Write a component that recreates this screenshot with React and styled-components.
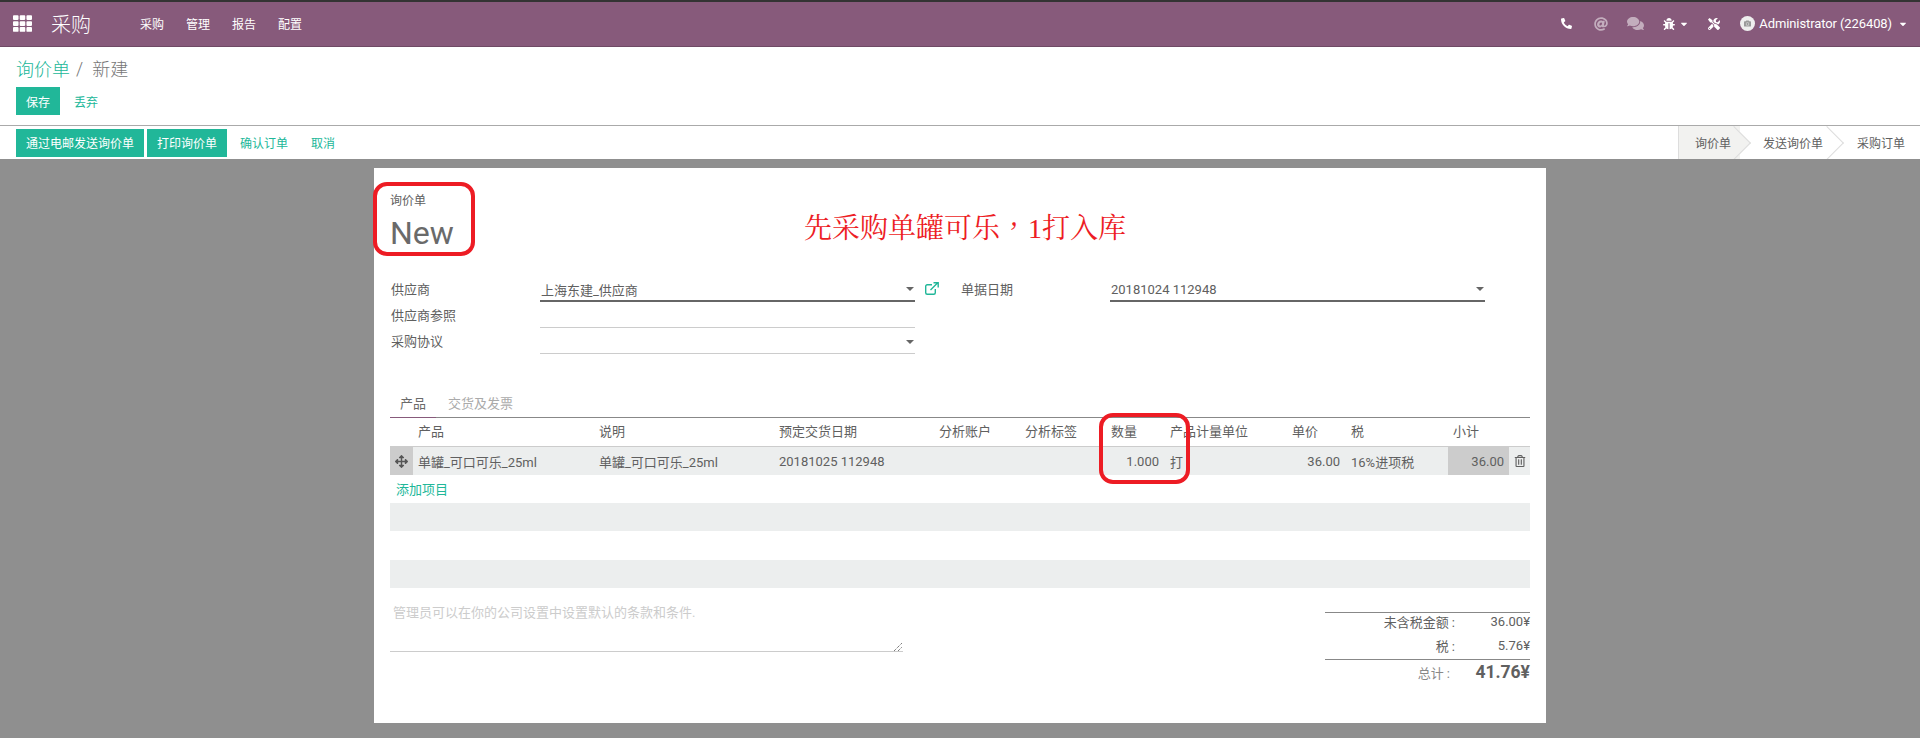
import React from 'react'
import styled, { createGlobalStyle } from 'styled-components'
import { FaTh, FaPhone, FaAt, FaComments, FaBug, FaTools, FaCaretDown, FaArrowsAlt, FaRegTrashAlt, FaCamera } from 'react-icons/fa'

const GlobalStyle = createGlobalStyle`
  html, body { margin: 0; padding: 0; height: 100%; }
  body {
    font-family: Roboto, "Noto Sans CJK SC", sans-serif;
    font-size: 13px;
    color: #606060;
    background: #8f8f8f;
    overflow: hidden;
  }
  * { box-sizing: border-box; }
`

const COLUMNS = '23px 181px 180px 160px 86px 86px 59px 122px 59px 102px 61px 21px'

const App = () => {
  return (
    <>
      <GlobalStyle />
      <Page>
        <Nav>
          <AppsIcon><FaTh size={19} /></AppsIcon>
          <Brand>采购</Brand>
          <Menu>
            <MenuItem>采购</MenuItem>
            <MenuItem>管理</MenuItem>
            <MenuItem>报告</MenuItem>
            <MenuItem>配置</MenuItem>
          </Menu>
          <Systray>
            <TrayIcon $width={33}><FaPhone size={11} style={{ transform: 'scaleX(-1)' }} /></TrayIcon>
            <TrayIcon $width={33} $dim><FaAt size={14} /></TrayIcon>
            <TrayIcon $width={36} $dim><FaComments size={17} /></TrayIcon>
            <TrayIcon $width={45}><FaBug size={12} /><FaCaretDown size={10} /></TrayIcon>
            <TrayIcon $width={32}><FaTools size={12} /></TrayIcon>
            <Avatar><FaCamera size={7} /></Avatar>
            <UserName>Administrator (226408)</UserName>
            <FaCaretDown size={10} />
          </Systray>
        </Nav>

        <ControlPanel>
          <Breadcrumb>
            <CrumbLink>询价单</CrumbLink>
            <CrumbSep>/</CrumbSep>
            <CrumbCurrent>新建</CrumbCurrent>
          </Breadcrumb>
          <Actions>
            <PrimaryButton>保存</PrimaryButton>
            <LinkButton>丢弃</LinkButton>
          </Actions>
        </ControlPanel>

        <StatusBar>
          <StatusActions>
            <PrimaryButton>通过电邮发送询价单</PrimaryButton>
            <PrimaryButton>打印询价单</PrimaryButton>
            <StatusLink>确认订单</StatusLink>
            <StatusLink>取消</StatusLink>
          </StatusActions>
          <Stages>
            <Stage $active $level={3} $left={16} $right={9}>询价单</Stage>
            <Stage $level={2} $left={23} $right={10}>发送询价单</Stage>
            <Stage $level={1} $left={24} $right={15} $last>采购订单</Stage>
          </Stages>
        </StatusBar>

        <Sheet>
          <Ring $left={-1} $top={14} $width={102} $height={74} />
          <Ring $left={725} $top={245} $width={91} $height={71} />
          <Note>先采购单罐可乐<Comma>，</Comma>1打入库</Note>

          <TitleLabel>询价单</TitleLabel>
          <Title>New</Title>

          <FormGrid>
            <Label>供应商</Label>
            <Field $active>
              <span>上海东建_供应商</span>
              <Caret />
            </Field>
            <LinkCell>
              <svg width="14" height="13" viewBox="0 0 14 13" fill="none" stroke="#21b799" strokeWidth="1.4">
                <path d="M7 2.7H2.2a1.5 1.5 0 0 0-1.5 1.5v6.6a1.5 1.5 0 0 0 1.5 1.5h6.6a1.5 1.5 0 0 0 1.5-1.5V7" />
                <path d="M5.5 8L12.5 1M8.5.8h4.7v4.7" />
              </svg>
            </LinkCell>
            <Label>单据日期</Label>
            <Field $active>
              <span>20181024 112948</span>
              <Caret />
            </Field>

            <Label>供应商参照</Label>
            <Field />
            <Spacer />

            <Label>采购协议</Label>
            <Field>
              <span />
              <Caret />
            </Field>
            <Spacer />
          </FormGrid>

          <Tabs>
            <Tab $active>产品</Tab>
            <Tab>交货及发票</Tab>
          </Tabs>

          <HeadRow>
            <Cell />
            <Cell>产品</Cell>
            <Cell>说明</Cell>
            <Cell>预定交货日期</Cell>
            <Cell>分析账户</Cell>
            <Cell>分析标签</Cell>
            <Cell>数量</Cell>
            <Cell>产品计量单位</Cell>
            <Cell>单价</Cell>
            <Cell>税</Cell>
            <Cell>小计</Cell>
            <Cell />
          </HeadRow>
          <BodyRow>
            <Handle><FaArrowsAlt size={13} /></Handle>
            <Cell>单罐_可口可乐_25ml</Cell>
            <Cell>单罐_可口可乐_25ml</Cell>
            <Cell>20181025 112948</Cell>
            <Cell />
            <Cell />
            <Cell $right>1.000</Cell>
            <Cell>打</Cell>
            <Cell $right>36.00</Cell>
            <Cell>16%进项税</Cell>
            <SubtotalCell>36.00</SubtotalCell>
            <TrashCell><FaRegTrashAlt size={12} /></TrashCell>
          </BodyRow>
          <AddRow>添加项目</AddRow>
          <BlankRow $filled />
          <BlankRow $tall />
          <BlankRow $filled />

          <Footer>
            <Notes>
              管理员可以在你的公司设置中设置默认的条款和条件.
              <Grip width="8" height="8" viewBox="0 0 8 8">
                <path d="M0 8L8 0M4 8L8 4" stroke="#444" strokeWidth="1" strokeDasharray="1 1" />
              </Grip>
            </Notes>
            <Totals>
              <TotalLabel>未含税金额 :</TotalLabel>
              <TotalValue>36.00¥</TotalValue>
              <TotalLabel>税 :</TotalLabel>
              <TotalValue>5.76¥</TotalValue>
              <GrandLabel>总计 :</GrandLabel>
              <GrandValue>41.76¥</GrandValue>
            </Totals>
          </Footer>
        </Sheet>
      </Page>
    </>
  )
}

export default App

const Page = styled.div`
  height: 738px;
  display: flex;
  flex-direction: column;
  overflow: hidden;
`

const Nav = styled.div`
  height: 47px;
  flex: none;
  display: flex;
  align-items: center;
  padding-bottom: 1px;
  background: #875a7b;
  border-top: 2px solid #333;
  border-bottom: 1px solid #6f4a65;
  color: #fff;
`

const AppsIcon = styled.div`
  width: 51px;
  padding-left: 13px;
  display: flex;
`

const Brand = styled.div`
  width: 84px;
  font-size: 20px;
  font-weight: 300;
`

const Menu = styled.div`
  display: flex;
  margin-left: 5px;
  gap: 22px;
`

const MenuItem = styled.div`
  font-size: 12px;
`

const Systray = styled.div`
  margin-left: auto;
  padding-right: 12px;
  display: flex;
  align-items: center;
`

const TrayIcon = styled.div`
  width: ${p => p.$width}px;
  display: flex;
  align-items: center;
  gap: 4px;
  opacity: ${p => (p.$dim ? 0.5 : 1)};
`

const Avatar = styled.div`
  width: 15px;
  height: 15px;
  border-radius: 50%;
  background: #eee;
  color: #999;
  display: flex;
  align-items: center;
  justify-content: center;
`

const UserName = styled.div`
  font-size: 13px;
  letter-spacing: -0.1px;
  margin: 0 6px 0 4px;
`

const ControlPanel = styled.div`
  flex: none;
  height: 78px;
  padding: 9px 16px 0;
  background: #fff;
`

const Breadcrumb = styled.div`
  display: flex;
  align-items: center;
  height: 24px;
  font-size: 18px;
  font-weight: 300;
`

const CrumbLink = styled.span`
  color: #21b799;
`

const CrumbSep = styled.span`
  color: #777;
  margin: 0 9px 0 6px;
`

const CrumbCurrent = styled.span`
  color: #777;
`

const Actions = styled.div`
  display: flex;
  margin-top: 7px;
`

const PrimaryButton = styled.button`
  height: 28px;
  padding: 0 10px;
  border: 0;
  background: #21b799;
  color: #fff;
  font: inherit;
  font-size: 12px;
`

const LinkButton = styled(PrimaryButton)`
  background: transparent;
  color: #21b799;
  padding: 0 14px;
`

const StatusLink = styled(LinkButton)`
  padding: 0 10px;
`

const StatusBar = styled.div`
  flex: none;
  height: 34px;
  display: flex;
  justify-content: space-between;
  background: #fff;
  border-top: 1px solid #aaa;
  padding-left: 16px;
`

const StatusActions = styled.div`
  display: flex;
  align-items: center;
  gap: 3px;
`

const Stages = styled.div`
  display: flex;
  overflow: hidden;
  border-left: 1px solid #ddd;
`

const Stage = styled.div`
  position: relative;
  display: flex;
  align-items: center;
  font-size: 12px;
  color: #606060;
  padding: 0 ${p => p.$right}px 0 ${p => p.$left}px;
  background: ${p => (p.$active ? '#f2f2f0' : '#fff')};
  z-index: ${p => p.$level};

  &::after {
    content: '';
    display: ${p => (p.$last ? 'none' : 'block')};
    position: absolute;
    z-index: -1;
    top: 5px;
    right: -6px;
    width: 23px;
    height: 23px;
    transform: rotate(45deg);
    background: ${p => (p.$active ? '#f2f2f0' : '#fff')};
    border-top: 1px solid #ddd;
    border-right: 1px solid #ddd;
  }
`

const Sheet = styled.div`
  position: relative;
  flex: none;
  width: 1172px;
  height: 555px;
  margin: 9px 0 0 374px;
  padding: 24px 16px 0;
  background: #fff;
`

const Ring = styled.div`
  position: absolute;
  left: ${p => p.$left}px;
  top: ${p => p.$top}px;
  width: ${p => p.$width}px;
  height: ${p => p.$height}px;
  border: 4px solid #ed1c24;
  border-radius: 14px;
  z-index: 3;
`

const Note = styled.div`
  position: absolute;
  left: 430px;
  top: 41px;
  color: #ed1c24;
  font-family: "Liberation Serif", "Noto Serif CJK SC", "Noto Sans CJK SC", serif;
  font-size: 28px;
  line-height: 34px;
  white-space: nowrap;
`

const Comma = styled.span`
  font-family: "Noto Serif CJK TC", "Noto Sans CJK TC", serif;
`

const TitleLabel = styled.div`
  font-size: 12px;
  line-height: 18px;
`

const Title = styled.div`
  font-size: 32px;
  line-height: 42px;
  margin-top: 2px;
  color: #6a6a6a;
`

const FormGrid = styled.div`
  display: grid;
  grid-template-columns: 150px 375px 45px 150px 375px;
  grid-auto-rows: 26px;
  margin-top: 22px;
`

const Label = styled.div`
  display: flex;
  align-items: center;
  padding: 0 0 1px 1px;
`

const Field = styled.div`
  display: flex;
  align-items: center;
  justify-content: space-between;
  padding: 2px 1px 0;
  border-bottom: ${p => (p.$active ? '2px solid #666' : '1px solid #ccc')};
`

const Caret = styled.i`
  width: 0;
  height: 0;
  border-left: 4px solid transparent;
  border-right: 4px solid transparent;
  border-top: 4px solid #666;
`

const LinkCell = styled.div`
  display: flex;
  align-items: center;
  padding: 0 0 1px 10px;
`

const Spacer = styled.div`
  grid-column: 3 / 6;
`

const Tabs = styled.div`
  display: flex;
  margin-top: 37px;
  height: 27px;
  border-bottom: 1px solid #888;
`

const Tab = styled.div`
  padding: 0 ${p => (p.$active ? 10 : 12)}px;
  line-height: 25px;
  height: 27px;
  color: ${p => (p.$active ? '#6a6a6a' : '#aaa')};
  border-bottom: 1px solid ${p => (p.$active ? '#875a7b' : 'transparent')};
`

const HeadRow = styled.div`
  display: grid;
  grid-template-columns: ${COLUMNS};
  height: 29px;
  align-items: center;
  padding-bottom: 3px;
  border-bottom: 1px solid #ccc;
`

const BodyRow = styled.div`
  display: grid;
  grid-template-columns: ${COLUMNS};
  height: 28px;
  align-items: stretch;
  background: #eceeee;
`

const Cell = styled.div`
  display: flex;
  align-items: center;
  justify-content: ${p => (p.$right ? 'flex-end' : 'flex-start')};
  padding: 0 6px 0 5px;
  white-space: nowrap;
`

const Handle = styled(Cell)`
  justify-content: center;
  padding: 0;
  background: #ccc;
  color: #555;
`

const SubtotalCell = styled(Cell)`
  justify-content: flex-end;
  padding-right: 5px;
  background: #ccc;
`

const TrashCell = styled(Cell)`
  padding: 0 0 0 5px;
`

const AddRow = styled.div`
  height: 28px;
  display: flex;
  align-items: center;
  padding: 0 0 2px 6px;
  color: #21b799;
`

const BlankRow = styled.div`
  height: ${p => (p.$tall ? 29 : 28)}px;
  background: ${p => (p.$filled ? '#eceeee' : 'transparent')};
`

const Footer = styled.div`
  display: flex;
  justify-content: space-between;
  align-items: flex-start;
  margin-top: 17px;
`

const Notes = styled.div`
  position: relative;
  width: 513px;
  height: 47px;
  padding: 0 3px;
  line-height: 15px;
  color: #ccc;
  border-bottom: 1px solid #ccc;
`

const Grip = styled.svg`
  position: absolute;
  right: 1px;
  bottom: 0;
`

const Totals = styled.div`
  width: 205px;
  margin-top: 7px;
  display: grid;
  grid-template-columns: 130px 75px;
  grid-template-rows: 24px 23px 28px;
  align-items: center;
  text-align: right;
  border-top: 1px solid #888;
  background: linear-gradient(#888, #888) 0 46px / 100% 1px no-repeat;
`

const TotalLabel = styled.div`
  padding-bottom: 7px;
  white-space: nowrap;
`

const TotalValue = styled.div`
  padding-bottom: 7px;
`

const GrandLabel = styled.div`
  padding: 0 5px 4px 0;
  color: #888;
`

const GrandValue = styled.div`
  padding-bottom: 4px;
  font-size: 17.5px;
  font-weight: 700;
`
